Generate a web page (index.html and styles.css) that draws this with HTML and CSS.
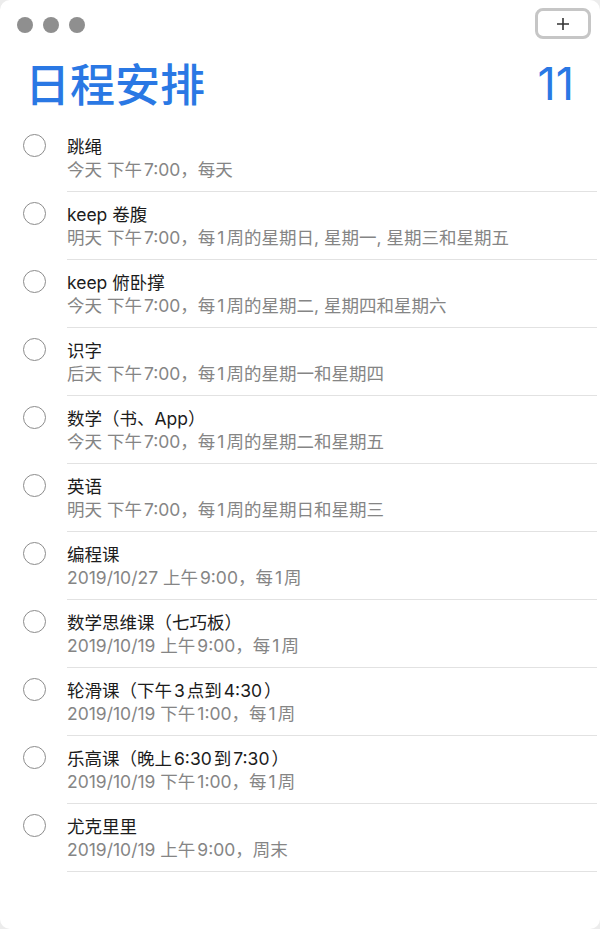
FILE: index.html
```html
<!DOCTYPE html>
<html lang="zh-CN">
<head>
<meta charset="utf-8">
<title>日程安排</title>
<link rel="stylesheet" href="styles.css">
</head>
<body>
<div class="window">
  <div class="toolbar">
    <div class="lights">
      <span class="light"></span>
      <span class="light"></span>
      <span class="light"></span>
    </div>
    <button class="add" type="button" aria-label="添加">
      <svg width="14" height="14" viewBox="0 0 14 14"><path d="M7 1v12M1 7h12" stroke="#333" stroke-width="1.6" fill="none"/></svg>
    </button>
  </div>
  <div class="header">
    <h1 class="title">日程安排</h1>
    <div class="count">11</div>
  </div>
  <ul class="list">
    <li class="item"><span class="check"></span><div class="text"><div class="name">跳绳</div><div class="meta">今天 下午<span class="t">7:00</span>，每天</div></div></li>
    <li class="item"><span class="check"></span><div class="text"><div class="name">keep 卷腹</div><div class="meta">明天 下午<span class="t">7:00</span>，每<span class="n">1</span>周的星期日, 星期一, 星期三和星期五</div></div></li>
    <li class="item"><span class="check"></span><div class="text"><div class="name">keep 俯卧撑</div><div class="meta">今天 下午<span class="t">7:00</span>，每<span class="n">1</span>周的星期二, 星期四和星期六</div></div></li>
    <li class="item"><span class="check"></span><div class="text"><div class="name">识字</div><div class="meta">后天 下午<span class="t">7:00</span>，每<span class="n">1</span>周的星期一和星期四</div></div></li>
    <li class="item"><span class="check"></span><div class="text"><div class="name">数学（书、App）</div><div class="meta">今天 下午<span class="t">7:00</span>，每<span class="n">1</span>周的星期二和星期五</div></div></li>
    <li class="item"><span class="check"></span><div class="text"><div class="name">英语</div><div class="meta">明天 下午<span class="t">7:00</span>，每<span class="n">1</span>周的星期日和星期三</div></div></li>
    <li class="item"><span class="check"></span><div class="text"><div class="name">编程课</div><div class="meta">2019/10/27 上午<span class="t">9:00</span>，每<span class="n">1</span>周</div></div></li>
    <li class="item"><span class="check"></span><div class="text"><div class="name">数学思维课（七巧板）</div><div class="meta">2019/10/19 上午<span class="t">9:00</span>，每<span class="n">1</span>周</div></div></li>
    <li class="item"><span class="check"></span><div class="text"><div class="name">轮滑课（下午<span class="n">3</span>点到<span class="n">4:30</span>）</div><div class="meta">2019/10/19 下午<span class="t">1:00</span>，每<span class="n">1</span>周</div></div></li>
    <li class="item"><span class="check"></span><div class="text"><div class="name">乐高课（晚上<span class="n">6:30</span>到<span class="n">7:30</span>）</div><div class="meta">2019/10/19 下午<span class="t">1:00</span>，每<span class="n">1</span>周</div></div></li>
    <li class="item"><span class="check"></span><div class="text"><div class="name">尤克里里</div><div class="meta">2019/10/19 上午<span class="t">9:00</span>，周末</div></div></li>
  </ul>
</div>
</body>
</html>
```
FILE: styles.css
```css
html, body {
  margin: 0;
  padding: 0;
  background: #ececec;
}
body {
  font-family: "Inter", "Noto Sans CJK SC", sans-serif;
}
.window {
  width: 600px;
  height: 929px;
  background: #ffffff;
  border-radius: 10px;
  overflow: hidden;
  box-sizing: border-box;
}
.toolbar {
  height: 48px;
  display: flex;
  align-items: center;
  justify-content: space-between;
  padding: 0 9px 0 17px;
  box-sizing: border-box;
}
.lights {
  display: flex;
  gap: 10px;
  margin-top: 2px;
}
.light {
  width: 16px;
  height: 16px;
  border-radius: 50%;
  background: #8f8f8f;
}
.add {
  width: 56px;
  height: 31px;
  box-sizing: border-box;
  border: 3px solid #c6c6c6;
  border-radius: 8px;
  background: #ffffff;
  display: flex;
  align-items: center;
  justify-content: center;
  padding: 0;
  margin-top: -1px;
}
.add svg { display: block; }
.header {
  display: flex;
  align-items: center;
  justify-content: space-between;
  height: 76px;
  padding: 0 26px 0 25px;
}
.title {
  margin: 0;
  font-family: "Noto Sans CJK SC", sans-serif;
  font-size: 45px;
  font-weight: 500;
  color: #2a78e4;
  line-height: 1;
  margin-top: -8px;
}
.count {
  font-family: "Inter", "Liberation Sans", sans-serif;
  font-size: 45px;
  font-weight: 400;
  color: #2a78e4;
  line-height: 1;
  margin-top: -6px;
}
.list {
  list-style: none;
  margin: 0;
  padding: 0;
}
.item {
  display: flex;
  align-items: flex-start;
}
.check {
  flex: none;
  width: 23px;
  height: 23px;
  box-sizing: border-box;
  border: 1.5px solid #8c8c8c;
  border-radius: 50%;
  margin: 10px 21px 0 23px;
}
.text {
  flex: 1;
  padding: 11px 0 10px 0;
  border-bottom: 1px solid #e2e2e2;
  margin-right: 3px;
}
.name {
  font-size: 17.5px;
  line-height: 23px;
  color: #1c1c1c;
}
.meta {
  font-size: 17.5px;
  line-height: 23px;
  color: #858585;
}
.n {
  padding: 0 2px;
}
.t {
  padding-left: 2px;
}
```
